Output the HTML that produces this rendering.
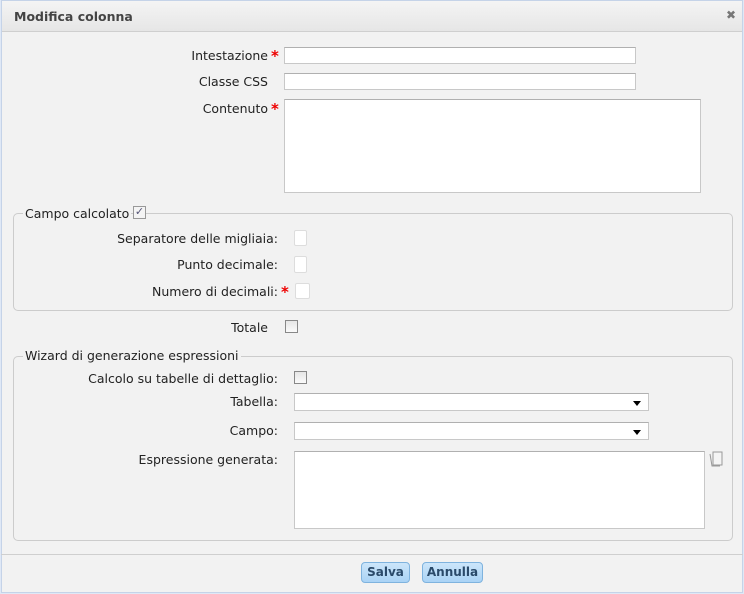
<!DOCTYPE html>
<html><head><style>
*{box-sizing:border-box;margin:0;padding:0}
body{width:744px;height:594px;background:#dfe8f6;font-family:"DejaVu Sans","Liberation Sans",sans-serif;font-size:12.5px;color:#222;position:relative;overflow:hidden}
.win{position:absolute;left:1px;top:0;width:742px;height:593px;background:#f2f2f2;border:1px solid #c5d3e8}
.title{position:absolute;left:0;top:0;width:740px;height:31px;background:linear-gradient(#f4f4f4,#e6e6e6);border-bottom:1px solid #cfcfcf}
.title b{position:absolute;left:12px;top:8px;font-size:12.5px;color:#444}
.x{position:absolute;left:724px;top:7px;font-size:12px;color:#777;font-weight:bold}
.lbl{position:absolute;text-align:right;white-space:nowrap}
.star{color:#e00;font-weight:bold;position:absolute;font-size:15px}
.in{position:absolute;background:#fff;border:1px solid #c8c8c8;border-top-color:#b0b0b0}
.cb{position:absolute;background:#fff;border:1px solid #ddd;border-radius:2px}
.ck{position:absolute;width:13px;height:13px;border:1px solid #888;background:linear-gradient(#e6e6e6,#fafafa)}
.fs{position:absolute;border:1px solid #ccc;border-radius:5px}
.lg{position:absolute;background:#f2f2f2;padding:0 2px}
.sel:after{content:"";position:absolute;right:7px;top:7px;border:4px solid transparent;border-top:5px solid #000}
.btn{position:absolute;top:562px;height:21px;border:1px solid #7fb3de;border-radius:4px;background:linear-gradient(#cce6fa,#a9d3f5);font-weight:bold;color:#2a4a6a;font-size:12px;text-align:center;line-height:19px}
</style></head><body>
<div class="win">
<div class="title"><b>Modifica colonna</b><span class="x">✖</span></div>
</div>
<span class="lbl" style="right:476px;top:48px">Intestazione</span><span class="star" style="left:271px;top:47px">*</span>
<div class="in" style="left:284px;top:47px;width:352px;height:17px"></div>
<span class="lbl" style="right:476px;top:74px">Classe CSS</span>
<div class="in" style="left:284px;top:73px;width:352px;height:17px"></div>
<span class="lbl" style="right:476px;top:101px">Contenuto</span><span class="star" style="left:271px;top:100px">*</span>
<div class="in" style="left:284px;top:99px;width:417px;height:94px"></div>

<div class="fs" style="left:13px;top:213px;width:720px;height:98px"></div>
<span class="lg" style="left:23px;top:206px">Campo calcolato</span>
<div class="ck" style="left:133px;top:206px;border-color:#999;background:#f4f4f4;font-size:11px;line-height:10px;color:#557;text-align:center">✓</div>
<span class="lbl" style="right:466px;top:231px">Separatore delle migliaia:</span>
<div class="cb" style="left:294px;top:230px;width:13px;height:16px"></div>
<span class="lbl" style="right:466px;top:257px">Punto decimale:</span>
<div class="cb" style="left:294px;top:256px;width:13px;height:17px"></div>
<span class="lbl" style="right:466px;top:284px">Numero di decimali:</span><span class="star" style="left:281px;top:283px">*</span>
<div class="cb" style="left:295px;top:283px;width:15px;height:16px"></div>

<span class="lbl" style="right:476px;top:320px">Totale</span>
<div class="ck" style="left:285px;top:320px"></div>

<div class="fs" style="left:13px;top:356px;width:720px;height:185px"></div>
<span class="lg" style="left:23px;top:348px">Wizard di generazione espressioni</span>
<span class="lbl" style="right:466px;top:371px">Calcolo su tabelle di dettaglio:</span>
<div class="ck" style="left:294px;top:371px"></div>
<span class="lbl" style="right:466px;top:394px">Tabella:</span>
<div class="in sel" style="left:294px;top:393px;width:355px;height:18px"></div>
<span class="lbl" style="right:466px;top:423px">Campo:</span>
<div class="in sel" style="left:294px;top:422px;width:355px;height:18px"></div>
<span class="lbl" style="right:466px;top:452px">Espressione generata:</span>
<div class="in" style="left:294px;top:451px;width:411px;height:78px"></div>
<svg style="position:absolute;left:708px;top:450px" width="16" height="18"><path d="M2 4 L4 16 L12 16" fill="#eee" stroke="#999"/><rect x="5" y="2" width="9" height="13" fill="#f4f4f4" stroke="#999"/></svg>

<div style="position:absolute;left:1px;top:554px;width:742px;border-top:1px solid #cfcfcf"></div>
<div class="btn" style="left:361px;width:49px">Salva</div>
<div class="btn" style="left:422px;width:61px">Annulla</div>
</body></html>
